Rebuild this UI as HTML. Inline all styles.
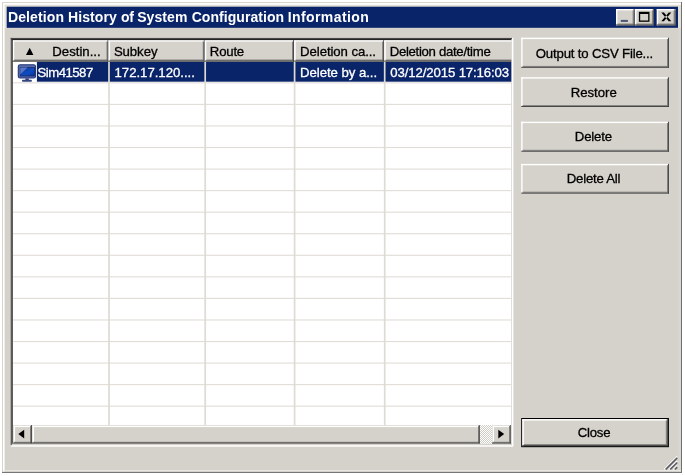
<!DOCTYPE html>
<html><head><meta charset="utf-8"><title>Deletion History of System Configuration Information</title>
<style>
html,body{margin:0;padding:0;background:#fff;overflow:hidden}
svg{display:block;font-family:"Liberation Sans",sans-serif;will-change:transform}
text{white-space:pre}
</style></head><body>
<svg width="685" height="476" viewBox="0 0 685 476">
<defs><filter id="soft" x="0" y="0" width="100%" height="100%" filterUnits="userSpaceOnUse" color-interpolation-filters="sRGB"><feGaussianBlur stdDeviation="0.42"/></filter></defs>
<g filter="url(#soft)">
<rect x="0.00" y="0.00" width="685.00" height="476.00" fill="#ffffff" />
<rect x="2.00" y="2.00" width="680.00" height="471.00" fill="#d5d2cb" />
<rect x="2.00" y="2.00" width="680.00" height="4.80" fill="#e4e1d6" />
<rect x="2.00" y="2.00" width="4.80" height="26.00" fill="#e4e1d6" />
<rect x="678.00" y="2.00" width="4.00" height="26.00" fill="#e4e1d6" />
<rect x="678.40" y="28.00" width="2.50" height="445.00" fill="#dad7d0" />
<rect x="2.00" y="2.00" width="680.00" height="1.00" fill="#d8d5cd" />
<rect x="2.00" y="2.00" width="1.00" height="471.00" fill="#d8d5cd" />
<rect x="3.00" y="3.00" width="678.00" height="1.70" fill="#ffffff" />
<rect x="3.00" y="3.00" width="1.60" height="469.00" fill="#ffffff" />
<rect x="3.00" y="470.30" width="678.00" height="1.10" fill="#f0eee9" />
<rect x="681.00" y="2.00" width="1.00" height="471.00" fill="#707074" />
<rect x="2.00" y="471.90" width="680.00" height="1.00" fill="#6c6c6c" />
<rect x="6.70" y="6.70" width="671.30" height="21.10" fill="#0a246a" />
<text y="22.2" fill="#fff" font-size="14" font-weight="bold"><tspan x="7.9" textLength="56.2">Deletion</tspan> <tspan x="68.0" textLength="48.7">History</tspan> <tspan x="120.9" textLength="13.0">of</tspan> <tspan x="137.2" textLength="50.2">System</tspan> <tspan x="191.7" textLength="92.4">Configuration</tspan> <tspan x="287.7" textLength="81.1">Information</tspan></text>
<rect x="616.00" y="9.00" width="18.50" height="16.40" fill="#d5d2cb" />
<rect x="616.00" y="9.00" width="18.50" height="1.40" fill="#ffffff" />
<rect x="616.00" y="9.00" width="1.40" height="16.40" fill="#ffffff" />
<rect x="617.40" y="23.50" width="16.15" height="0.95" fill="#8a8884" />
<rect x="632.60" y="10.40" width="0.95" height="14.05" fill="#8a8884" />
<rect x="616.00" y="24.45" width="18.50" height="0.95" fill="#4a4844" />
<rect x="633.55" y="9.00" width="0.95" height="16.40" fill="#4a4844" />
<rect x="635.00" y="9.00" width="18.80" height="16.40" fill="#d5d2cb" />
<rect x="635.00" y="9.00" width="18.80" height="1.40" fill="#ffffff" />
<rect x="635.00" y="9.00" width="1.40" height="16.40" fill="#ffffff" />
<rect x="636.40" y="23.50" width="16.45" height="0.95" fill="#8a8884" />
<rect x="651.90" y="10.40" width="0.95" height="14.05" fill="#8a8884" />
<rect x="635.00" y="24.45" width="18.80" height="0.95" fill="#4a4844" />
<rect x="652.85" y="9.00" width="0.95" height="16.40" fill="#4a4844" />
<rect x="656.80" y="9.00" width="18.70" height="16.40" fill="#d5d2cb" />
<rect x="656.80" y="9.00" width="18.70" height="1.40" fill="#ffffff" />
<rect x="656.80" y="9.00" width="1.40" height="16.40" fill="#ffffff" />
<rect x="658.20" y="23.50" width="16.35" height="0.95" fill="#8a8884" />
<rect x="673.60" y="10.40" width="0.95" height="14.05" fill="#8a8884" />
<rect x="656.80" y="24.45" width="18.70" height="0.95" fill="#4a4844" />
<rect x="674.55" y="9.00" width="0.95" height="16.40" fill="#4a4844" />
<rect x="620.80" y="19.90" width="7.10" height="2.00" fill="#4a5478" />
<rect x="638.90" y="11.80" width="10.60" height="10.00" fill="#000" />
<rect x="640.20" y="14.00" width="8.00" height="6.50" fill="#d5d2cb" />
<path d="M661.3 12.5 L663.9 12.5 L671.3 21.2 L668.7 21.2 Z M671.3 12.5 L668.7 12.5 L661.3 21.2 L663.9 21.2 Z" fill="#000"/>
<rect x="10.70" y="37.90" width="502.70" height="408.80" fill="#ffffff" />
<rect x="10.70" y="37.90" width="501.30" height="407.30" fill="#d5d2cb" />
<rect x="12.70" y="40.10" width="498.60" height="403.40" fill="#fff" />
<rect x="36.90" y="61.70" width="474.40" height="20.00" fill="#0a246a" />
<rect x="12.70" y="82.30" width="498.60" height="1.10" fill="#e0ddd7" />
<rect x="12.70" y="103.86" width="498.60" height="1.10" fill="#e0ddd7" />
<rect x="12.70" y="125.41" width="498.60" height="1.10" fill="#e0ddd7" />
<rect x="12.70" y="146.97" width="498.60" height="1.10" fill="#e0ddd7" />
<rect x="12.70" y="168.52" width="498.60" height="1.10" fill="#e0ddd7" />
<rect x="12.70" y="190.08" width="498.60" height="1.10" fill="#e0ddd7" />
<rect x="12.70" y="211.63" width="498.60" height="1.10" fill="#e0ddd7" />
<rect x="12.70" y="233.19" width="498.60" height="1.10" fill="#e0ddd7" />
<rect x="12.70" y="254.74" width="498.60" height="1.10" fill="#e0ddd7" />
<rect x="12.70" y="276.30" width="498.60" height="1.10" fill="#e0ddd7" />
<rect x="12.70" y="297.85" width="498.60" height="1.10" fill="#e0ddd7" />
<rect x="12.70" y="319.41" width="498.60" height="1.10" fill="#e0ddd7" />
<rect x="12.70" y="340.96" width="498.60" height="1.10" fill="#e0ddd7" />
<rect x="12.70" y="362.52" width="498.60" height="1.10" fill="#e0ddd7" />
<rect x="12.70" y="384.07" width="498.60" height="1.10" fill="#e0ddd7" />
<rect x="12.70" y="405.63" width="498.60" height="1.10" fill="#e0ddd7" />
<rect x="108.15" y="61.60" width="1.70" height="363.60" fill="#dedbd4" />
<rect x="204.35" y="61.60" width="1.70" height="363.60" fill="#dedbd4" />
<rect x="293.75" y="61.60" width="1.70" height="363.60" fill="#dedbd4" />
<rect x="383.85" y="61.60" width="1.70" height="363.60" fill="#dedbd4" />
<rect x="12.70" y="40.10" width="95.90" height="21.50" fill="#d5d2cb" />
<rect x="12.70" y="40.10" width="95.90" height="1.50" fill="#ffffff" />
<rect x="12.70" y="40.10" width="1.50" height="21.50" fill="#ffffff" />
<rect x="14.20" y="59.60" width="93.40" height="1.00" fill="#6e6e6e" />
<rect x="106.60" y="41.60" width="1.00" height="19.00" fill="#6e6e6e" />
<rect x="12.70" y="60.60" width="95.90" height="1.00" fill="#303030" />
<rect x="107.60" y="40.10" width="1.00" height="21.50" fill="#303030" />
<rect x="108.60" y="40.10" width="96.20" height="21.50" fill="#d5d2cb" />
<rect x="108.60" y="40.10" width="96.20" height="1.50" fill="#ffffff" />
<rect x="108.60" y="40.10" width="1.50" height="21.50" fill="#ffffff" />
<rect x="110.10" y="59.60" width="93.70" height="1.00" fill="#6e6e6e" />
<rect x="202.80" y="41.60" width="1.00" height="19.00" fill="#6e6e6e" />
<rect x="108.60" y="60.60" width="96.20" height="1.00" fill="#303030" />
<rect x="203.80" y="40.10" width="1.00" height="21.50" fill="#303030" />
<rect x="204.80" y="40.10" width="89.40" height="21.50" fill="#d5d2cb" />
<rect x="204.80" y="40.10" width="89.40" height="1.50" fill="#ffffff" />
<rect x="204.80" y="40.10" width="1.50" height="21.50" fill="#ffffff" />
<rect x="206.30" y="59.60" width="86.90" height="1.00" fill="#6e6e6e" />
<rect x="292.20" y="41.60" width="1.00" height="19.00" fill="#6e6e6e" />
<rect x="204.80" y="60.60" width="89.40" height="1.00" fill="#303030" />
<rect x="293.20" y="40.10" width="1.00" height="21.50" fill="#303030" />
<rect x="294.20" y="40.10" width="90.10" height="21.50" fill="#d5d2cb" />
<rect x="294.20" y="40.10" width="90.10" height="1.50" fill="#ffffff" />
<rect x="294.20" y="40.10" width="1.50" height="21.50" fill="#ffffff" />
<rect x="295.70" y="59.60" width="87.60" height="1.00" fill="#6e6e6e" />
<rect x="382.30" y="41.60" width="1.00" height="19.00" fill="#6e6e6e" />
<rect x="294.20" y="60.60" width="90.10" height="1.00" fill="#303030" />
<rect x="383.30" y="40.10" width="1.00" height="21.50" fill="#303030" />
<rect x="384.30" y="40.10" width="127.00" height="21.50" fill="#d5d2cb" />
<rect x="384.30" y="40.10" width="127.00" height="1.50" fill="#ffffff" />
<rect x="384.30" y="40.10" width="1.50" height="21.50" fill="#ffffff" />
<rect x="385.80" y="59.60" width="125.50" height="1.00" fill="#6e6e6e" />
<rect x="384.30" y="60.60" width="127.00" height="1.00" fill="#303030" />
<path d="M26 54.9 L33.4 54.9 L29.7 47.8 Z" fill="#000"/>
<text x="52.30" y="55.60" fill="#000" stroke="#000" stroke-width="0.3" font-size="13.2" text-anchor="start" font-weight="normal"  textLength="48.31">Destin...</text>
<text x="113.90" y="55.60" fill="#000" stroke="#000" stroke-width="0.3" font-size="13.2" text-anchor="start" font-weight="normal"  textLength="43.58">Subkey</text>
<text x="209.83" y="55.60" fill="#000" stroke="#000" stroke-width="0.3" font-size="13.2" text-anchor="start" font-weight="normal"  textLength="34.38">Route</text>
<text x="300.11" y="55.60" fill="#000" stroke="#000" stroke-width="0.3" font-size="13.2" text-anchor="start" font-weight="normal"  textLength="75.88">Deletion ca...</text>
<text x="389.74" y="55.60" fill="#000" stroke="#000" stroke-width="0.3" font-size="13.2" text-anchor="start" font-weight="normal"  textLength="100.98">Deletion date/time</text>
<text x="37.57" y="77.00" fill="#fff" stroke="#fff" stroke-width="0.3" font-size="13.2" text-anchor="start" font-weight="normal"  textLength="55.68">Sim41587</text>
<text x="114.55" y="77.00" fill="#fff" stroke="#fff" stroke-width="0.3" font-size="13.2" text-anchor="start" font-weight="normal"  textLength="80.34">172.17.120....</text>
<text x="300.07" y="77.00" fill="#fff" stroke="#fff" stroke-width="0.3" font-size="13.2" text-anchor="start" font-weight="normal"  textLength="77.00">Delete by a...</text>
<text x="390.36" y="77.00" fill="#fff" stroke="#fff" stroke-width="0.3" font-size="13.2" text-anchor="start" font-weight="normal"  textLength="118.78">03/12/2015 17:16:03</text>
<rect x="18.3" y="64.7" width="17.2" height="13.3" rx="1.8" fill="#566aa8" stroke="#263878" stroke-width="1.1"/>
<defs><linearGradient id="scr" x1="0" y1="0" x2="1" y2="1"><stop offset="0" stop-color="#0c38a0"/><stop offset="0.6" stop-color="#0e4cc0"/><stop offset="1" stop-color="#0a2f90"/></linearGradient></defs>
<rect x="20.30" y="67.60" width="14.10" height="8.40" fill="url(#scr)" stroke="#1a2a6c" stroke-width="0.8"/>
<path d="M20.3 67.6 L27.5 67.6 L20.3 74.5 Z" fill="#5b76c2"/>
<rect x="25.40" y="78.40" width="3.40" height="1.60" fill="#2a3a76" />
<rect x="22" y="79.8" width="9.9" height="2" rx="0.8" fill="#34467f"/>
<defs><pattern id="dith" width="2" height="2" patternUnits="userSpaceOnUse"><rect width="2" height="2" fill="#d0cdc6"/><rect width="1" height="1" fill="#fff"/><rect x="1" y="1" width="1" height="1" fill="#fff"/></pattern></defs>
<rect x="12.70" y="425.10" width="498.60" height="18.40" fill="url(#dith)" />
<rect x="13.10" y="425.10" width="18.70" height="18.40" fill="#d5d2cb" />
<rect x="13.70" y="425.70" width="17.25" height="1.40" fill="#ffffff" />
<rect x="13.70" y="425.70" width="1.40" height="16.95" fill="#ffffff" />
<rect x="13.95" y="441.80" width="17.00" height="0.85" fill="#777777" />
<rect x="30.10" y="425.95" width="0.85" height="16.70" fill="#777777" />
<rect x="13.10" y="442.65" width="18.70" height="0.85" fill="#2c2c2c" />
<rect x="30.95" y="425.10" width="0.85" height="18.40" fill="#2c2c2c" />
<rect x="32.00" y="425.10" width="447.70" height="18.40" fill="#d5d2cb" />
<rect x="32.60" y="425.70" width="446.25" height="1.40" fill="#ffffff" />
<rect x="32.60" y="425.70" width="1.40" height="16.95" fill="#ffffff" />
<rect x="32.85" y="441.80" width="446.00" height="0.85" fill="#777777" />
<rect x="478.00" y="425.95" width="0.85" height="16.70" fill="#777777" />
<rect x="32.00" y="442.65" width="447.70" height="0.85" fill="#2c2c2c" />
<rect x="478.85" y="425.10" width="0.85" height="18.40" fill="#2c2c2c" />
<rect x="492.00" y="425.10" width="18.80" height="18.40" fill="#d5d2cb" />
<rect x="492.60" y="425.70" width="17.35" height="1.40" fill="#ffffff" />
<rect x="492.60" y="425.70" width="1.40" height="16.95" fill="#ffffff" />
<rect x="492.85" y="441.80" width="17.10" height="0.85" fill="#777777" />
<rect x="509.10" y="425.95" width="0.85" height="16.70" fill="#777777" />
<rect x="492.00" y="442.65" width="18.80" height="0.85" fill="#2c2c2c" />
<rect x="509.95" y="425.10" width="0.85" height="18.40" fill="#2c2c2c" />
<rect x="510.80" y="425.10" width="0.50" height="18.40" fill="#d5d2cb" />
<path d="M24.2 429.7 L24.2 438.4 L18.3 434.05 Z" fill="#000"/>
<path d="M498.3 429.7 L498.3 438.4 L504.2 434.05 Z" fill="#000"/>
<rect x="10.70" y="37.90" width="501.30" height="1.10" fill="#484848" />
<rect x="10.70" y="37.90" width="1.00" height="407.30" fill="#484848" />
<rect x="11.70" y="39.00" width="499.60" height="1.10" fill="#262626" />
<rect x="11.70" y="39.00" width="1.00" height="404.70" fill="#262626" />
<rect x="521.20" y="37.70" width="147.70" height="30.10" fill="#d5d2cb" />
<rect x="521.20" y="37.70" width="147.70" height="1.40" fill="#ffffff" />
<rect x="521.20" y="37.70" width="1.40" height="30.10" fill="#ffffff" />
<rect x="522.60" y="65.90" width="145.35" height="0.95" fill="#808080" />
<rect x="667.00" y="39.10" width="0.95" height="27.75" fill="#808080" />
<rect x="521.20" y="66.85" width="147.70" height="0.95" fill="#404040" />
<rect x="667.95" y="37.70" width="0.95" height="30.10" fill="#404040" />
<text x="594.50" y="57.55" fill="#000" stroke="#000" stroke-width="0.3" font-size="13.2" text-anchor="middle" font-weight="normal"  textLength="117.57">Output to CSV File...</text>
<rect x="521.20" y="77.20" width="147.70" height="29.80" fill="#d5d2cb" />
<rect x="521.20" y="77.20" width="147.70" height="1.40" fill="#ffffff" />
<rect x="521.20" y="77.20" width="1.40" height="29.80" fill="#ffffff" />
<rect x="522.60" y="105.10" width="145.35" height="0.95" fill="#808080" />
<rect x="667.00" y="78.60" width="0.95" height="27.45" fill="#808080" />
<rect x="521.20" y="106.05" width="147.70" height="0.95" fill="#404040" />
<rect x="667.95" y="77.20" width="0.95" height="29.80" fill="#404040" />
<text x="593.75" y="96.90" fill="#000" stroke="#000" stroke-width="0.3" font-size="13.2" text-anchor="middle" font-weight="normal"  textLength="45.97">Restore</text>
<rect x="521.20" y="121.70" width="147.70" height="30.00" fill="#d5d2cb" />
<rect x="521.20" y="121.70" width="147.70" height="1.40" fill="#ffffff" />
<rect x="521.20" y="121.70" width="1.40" height="30.00" fill="#ffffff" />
<rect x="522.60" y="149.80" width="145.35" height="0.95" fill="#808080" />
<rect x="667.00" y="123.10" width="0.95" height="27.65" fill="#808080" />
<rect x="521.20" y="150.75" width="147.70" height="0.95" fill="#404040" />
<rect x="667.95" y="121.70" width="0.95" height="30.00" fill="#404040" />
<text x="593.41" y="141.20" fill="#000" stroke="#000" stroke-width="0.3" font-size="13.2" text-anchor="middle" font-weight="normal"  textLength="37.14">Delete</text>
<rect x="521.20" y="163.90" width="147.70" height="29.70" fill="#d5d2cb" />
<rect x="521.20" y="163.90" width="147.70" height="1.40" fill="#ffffff" />
<rect x="521.20" y="163.90" width="1.40" height="29.70" fill="#ffffff" />
<rect x="522.60" y="191.70" width="145.35" height="0.95" fill="#808080" />
<rect x="667.00" y="165.30" width="0.95" height="27.35" fill="#808080" />
<rect x="521.20" y="192.65" width="147.70" height="0.95" fill="#404040" />
<rect x="667.95" y="163.90" width="0.95" height="29.70" fill="#404040" />
<text x="593.59" y="183.35" fill="#000" stroke="#000" stroke-width="0.3" font-size="13.2" text-anchor="middle" font-weight="normal"  textLength="53.50">Delete All</text>
<rect x="521.20" y="418.00" width="147.70" height="29.20" fill="#000" />
<rect x="522.30" y="419.10" width="145.50" height="27.00" fill="#d5d2cb" />
<rect x="522.30" y="419.10" width="145.50" height="1.50" fill="#ffffff" />
<rect x="522.30" y="419.10" width="1.50" height="27.00" fill="#ffffff" />
<rect x="523.80" y="444.10" width="143.00" height="1.00" fill="#808080" />
<rect x="665.80" y="420.60" width="1.00" height="24.50" fill="#808080" />
<rect x="522.30" y="445.10" width="145.50" height="1.00" fill="#404040" />
<rect x="666.80" y="419.10" width="1.00" height="27.00" fill="#404040" />
<text x="594.13" y="437.40" fill="#000" stroke="#000" stroke-width="0.3" font-size="13.2" text-anchor="middle" font-weight="normal"  textLength="32.95">Close</text>
<path d="M664.2 469.4 L677.2 456.4" stroke="#fff" stroke-width="1.2"/>
<path d="M665.7 469.4 L677.2 457.9" stroke="#5a5a60" stroke-width="1.5"/>
<path d="M668.8 469.4 L677.2 461.0" stroke="#fff" stroke-width="1.2"/>
<path d="M670.3 469.4 L677.2 462.5" stroke="#5a5a60" stroke-width="1.5"/>
<path d="M673.4 469.4 L677.2 465.6" stroke="#fff" stroke-width="1.2"/>
<path d="M674.9 469.4 L677.2 467.1" stroke="#5a5a60" stroke-width="1.5"/>
</g>
</svg>
</body></html>
